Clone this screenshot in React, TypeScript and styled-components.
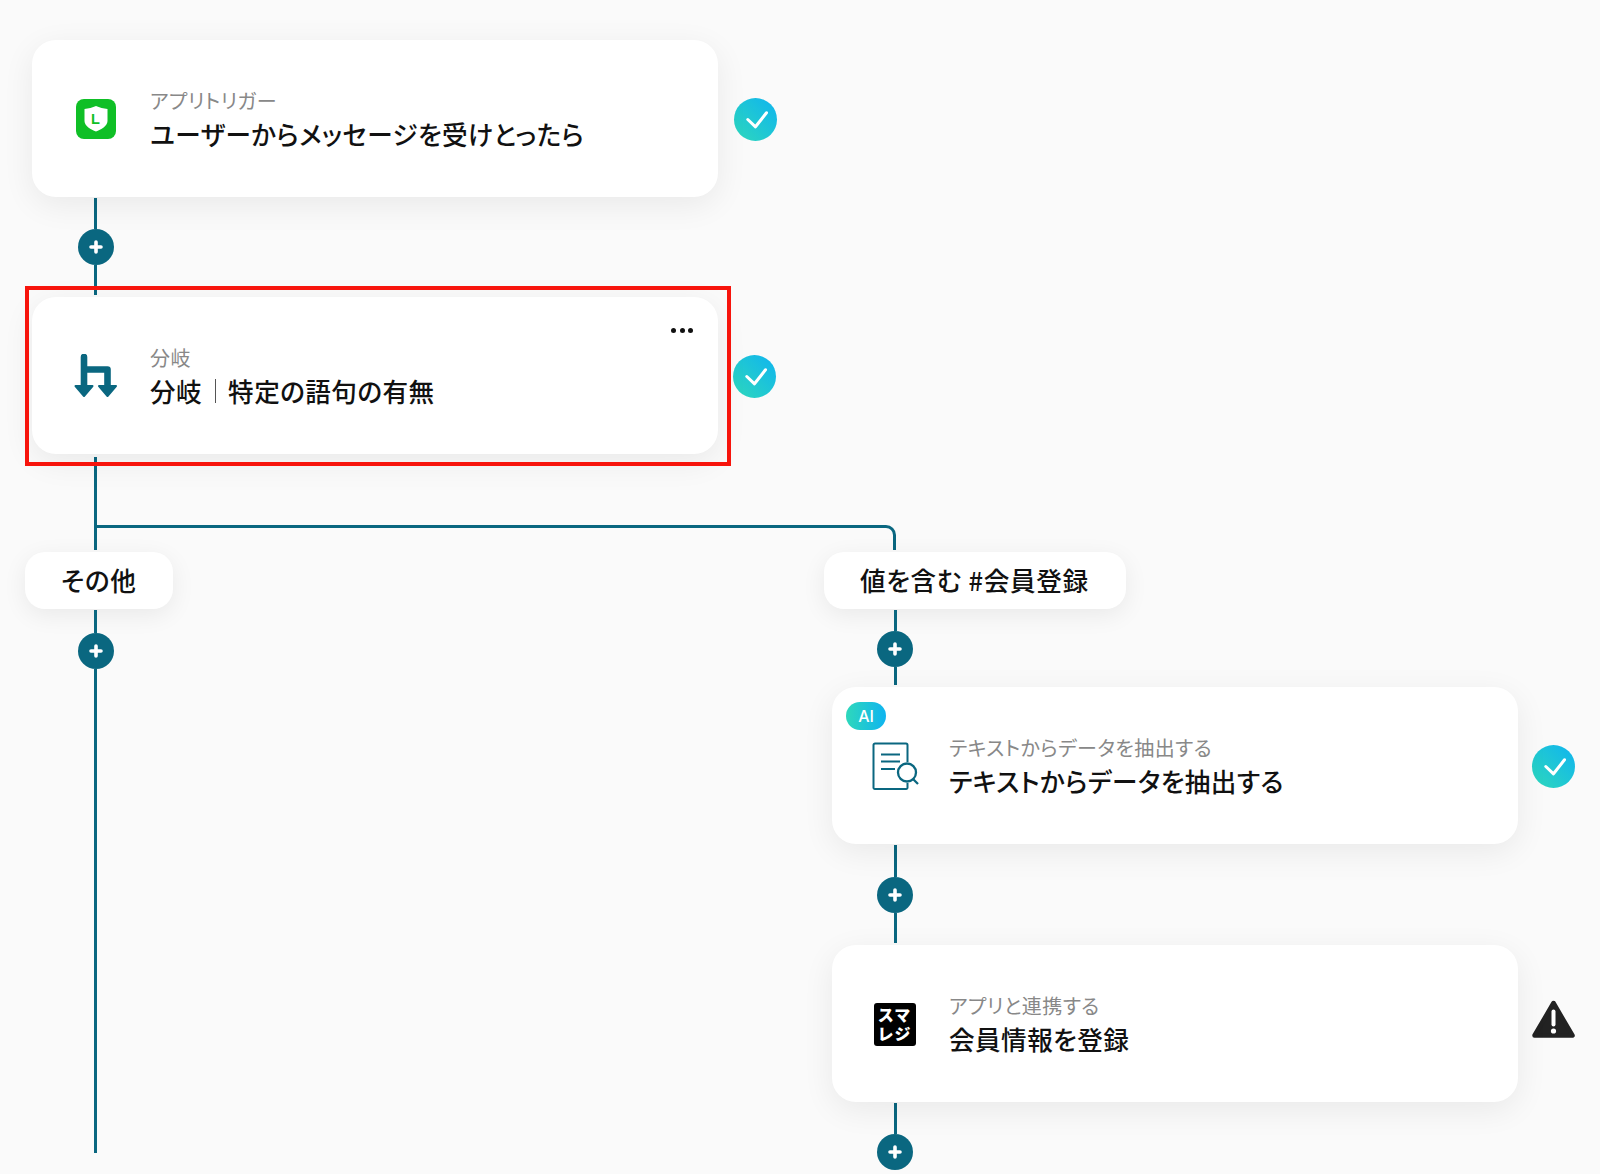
import React from 'react';
import styled, { createGlobalStyle } from 'styled-components';

const teal = '#0a6780';

const GlobalStyle = createGlobalStyle`
  html, body {
    margin: 0;
    padding: 0;
    background: #fafafa;
  }
  * {
    box-sizing: border-box;
  }
`;

const PlusIcon = () => (
  <svg width="14" height="14" viewBox="0 0 14 14">
    <path d="M7 2v10M2 7h10" stroke="#fff" strokeWidth="3.6" strokeLinecap="round" />
  </svg>
);

const Connector = ({ inset, above, below }: { inset: number; above: number; below: number }) => (
  <ConnectorBox $inset={inset}>
    <Stem $height={above} />
    <PlusButton>
      <PlusIcon />
    </PlusButton>
    <Stem $height={below} />
  </ConnectorBox>
);

const DoneBadge = ({ gap, drop }: { gap: number; drop: number }) => (
  <StatusBadge $gap={gap} $drop={drop}>
    <svg width="43" height="43" viewBox="0 0 43 43">
      <path
        d="M13.800 21.500l7.700 7.300 11-14"
        fill="none"
        stroke="#fff"
        strokeWidth="3"
        strokeLinecap="round"
        strokeLinejoin="round"
      />
    </svg>
  </StatusBadge>
);

const WarningBadge = () => (
  <WarningBox>
    <svg width="43" height="40" viewBox="0 0 43 40">
      <path
        d="M21.500 3L40.500 35.500H2.500Z"
        fill="#222"
        stroke="#222"
        strokeWidth="4.500"
        strokeLinejoin="round"
      />
      <path d="M21.500 11.500v13" stroke="#fff" strokeWidth="4" strokeLinecap="round" />
      <circle cx="21.500" cy="31" r="2.600" fill="#fff" />
    </svg>
  </WarningBox>
);

const LineIcon = () => (
  <LineLogo>
    <svg width="40" height="40" viewBox="0 0 40 40">
      <path
        d="M8.500 10C12.500 9.600 16.500 8.600 20 7c3.500 1.600 7.500 2.600 11.500 3v12c0 5-6.500 8.600-11.500 10.600C15 30.600 8.500 27 8.500 22Z"
        fill="#fff"
      />
      <text x="15" y="24.500" fontFamily="'Liberation Sans', sans-serif" fontWeight="700" fontSize="14.500" fill="#0fbf26">
        L
      </text>
    </svg>
  </LineLogo>
);

const BranchIcon = () => (
  <svg width="44" height="44" viewBox="0 0 44 44">
    <path
      d="M10 3v30M10 15.500h23.500v17"
      fill="none"
      stroke={teal}
      strokeWidth="6.600"
      strokeLinecap="round"
      strokeLinejoin="round"
    />
    <path d="M1.500 32h17L10 42Z" fill={teal} stroke={teal} strokeWidth="2" strokeLinejoin="round" />
    <path d="M25 32h17l-8.500 10Z" fill={teal} stroke={teal} strokeWidth="2" strokeLinejoin="round" />
  </svg>
);

const ExtractIcon = () => (
  <ExtractBox>
    <svg width="47" height="48" viewBox="0 0 47 48">
      <path
        d="M35 20V3a1.500 1.500 0 0 0-1.500-1.500H2.500A1.500 1.500 0 0 0 1 3v43a1.500 1.500 0 0 0 1.500 1h31a1.500 1.500 0 0 0 1.500-1v-5"
        transform="translate(0.500 0)"
        fill="none"
        stroke={teal}
        strokeWidth="2"
      />
      <path d="M9 12.500h19M9 19.500h19M9 27h14" stroke={teal} strokeWidth="2" />
      <circle cx="35" cy="30.500" r="9" fill="#fff" stroke={teal} strokeWidth="2.300" />
      <path d="M41 37l5 5" stroke={teal} strokeWidth="2.300" />
    </svg>
  </ExtractBox>
);

const App = () => (
  <>
    <GlobalStyle />
    <Canvas>
      <TopColumn>
        <StepRow>
          <Card>
            <IconSlot>
              <LineIcon />
            </IconSlot>
            <CardText>
              <CardLabel>アプリトリガー</CardLabel>
              <CardTitle>ユーザーからメッセージを受けとったら</CardTitle>
            </CardText>
          </Card>
          <DoneBadge gap={15.5} drop={1} />
        </StepRow>
        <Connector inset={45.5} above={31} below={30} />
        <StepRow>
          <Card>
            <Highlight />
            <MoreMenu>
              <Dot />
              <Dot />
              <Dot />
            </MoreMenu>
            <IconSlot>
              <BranchIcon />
            </IconSlot>
            <CardText>
              <CardLabel>分岐</CardLabel>
              <CardTitle>
                分岐<TitleDivider />特定の語句の有無
              </CardTitle>
            </CardText>
          </Card>
          <DoneBadge gap={14.5} drop={2} />
        </StepRow>
        <BranchStem />
        <BranchRail />
      </TopColumn>
      <BranchRow>
        <LeftBranch>
          <BranchPill>その他</BranchPill>
          <Connector inset={52.5} above={23} below={484} />
        </LeftBranch>
        <RightBranch>
          <BranchPill>値を含む #会員登録</BranchPill>
          <Connector inset={53} above={21} below={18} />
          <IndentedSteps>
            <StepRow>
              <Card $gap={31}>
                <AiTag>AI</AiTag>
                <IconSlot>
                  <ExtractIcon />
                </IconSlot>
                <CardText>
                  <CardLabel>テキストからデータを抽出する</CardLabel>
                  <CardTitle>テキストからデータを抽出する</CardTitle>
                </CardText>
              </Card>
              <DoneBadge gap={14} drop={1} />
            </StepRow>
          </IndentedSteps>
          <Connector inset={53} above={32} below={30} />
          <IndentedSteps>
            <StepRow>
              <Card $gap={31}>
                <IconSlot>
                  <SmaregiLogo>
                    <SmaregiLine>スマ</SmaregiLine>
                    <SmaregiLine>レジ</SmaregiLine>
                  </SmaregiLogo>
                </IconSlot>
                <CardText>
                  <CardLabel>アプリと連携する</CardLabel>
                  <CardTitle>会員情報を登録</CardTitle>
                </CardText>
              </Card>
              <WarningBadge />
            </StepRow>
          </IndentedSteps>
          <Connector inset={53} above={31} below={0} />
        </RightBranch>
      </BranchRow>
    </Canvas>
  </>
);

const Canvas = styled.div`
  width: 1600px;
  height: 1174px;
  overflow: hidden;
  padding-top: 40px;
  background: #fafafa;
  font-family: 'Noto Sans CJK JP', 'Noto Sans', sans-serif;
  color: #111;
`;

const TopColumn = styled.div`
  display: flex;
  flex-direction: column;
  padding-left: 32px;
`;

const StepRow = styled.div`
  display: flex;
  align-items: center;
`;

const Card = styled.div<{ $gap?: number }>`
  position: relative;
  display: flex;
  align-items: center;
  flex: none;
  width: 686px;
  height: 157px;
  padding-left: 42px;
  gap: ${({ $gap }) => $gap ?? 32}px;
  background: #fff;
  border-radius: 24px;
  box-shadow: 0 8px 32px rgba(0, 0, 0, 0.07);
`;

const IconSlot = styled.div`
  display: flex;
  align-items: center;
  justify-content: center;
  flex: none;
  width: 44px;
  height: 48px;
`;

const CardText = styled.div`
  display: flex;
  flex-direction: column;
`;

const CardLabel = styled.div`
  font-size: 20px;
  line-height: 30px;
  letter-spacing: 0.45px;
  color: #888;
  font-feature-settings: 'palt';
`;

const CardTitle = styled.div`
  display: flex;
  align-items: center;
  font-size: 25.6px;
  line-height: 36px;
  letter-spacing: 0.45px;
  font-weight: 500;
  color: #111;
  font-feature-settings: 'palt';
`;

const TitleDivider = styled.span`
  display: block;
  width: 1px;
  height: 24px;
  margin: 0 12.5px;
  background: #555;
`;

const Highlight = styled.div`
  position: absolute;
  top: -11px;
  left: -7px;
  right: -13px;
  bottom: -12px;
  border: 4px solid #f7140c;
  pointer-events: none;
`;

const MoreMenu = styled.div`
  position: absolute;
  top: 31px;
  right: 25px;
  display: flex;
  gap: 3.5px;
`;

const Dot = styled.span`
  width: 5px;
  height: 5px;
  border-radius: 50%;
  background: #111;
`;

const StatusBadge = styled.div<{ $gap: number; $drop: number }>`
  flex: none;
  width: 43px;
  height: 43px;
  margin-left: ${({ $gap }) => $gap}px;
  margin-top: ${({ $drop }) => $drop}px;
  border-radius: 50%;
  background: linear-gradient(45deg, #2ed8bb, #0fb4f0);
`;

const WarningBox = styled.div`
  flex: none;
  width: 43px;
  height: 40px;
  margin: -7px 0 0 14px;
`;

const LineLogo = styled.div`
  width: 40px;
  height: 40px;
  margin-left: -1px;
  border-radius: 8px;
  background: #0fbf26;
`;

const ExtractBox = styled.div`
  flex: none;
  width: 47px;
  height: 48px;
  margin-left: -2px;
`;

const SmaregiLogo = styled.div`
  flex: none;
  width: 42px;
  height: 43px;
  margin: 2px 0 0 -3px;
  padding-top: 2px;
  border-radius: 3px;
  background: #000;
  color: #fff;
  text-align: center;
`;

const SmaregiLine = styled.div`
  font-size: 16px;
  line-height: 19px;
  letter-spacing: 1px;
  font-weight: 900;
`;

const AiTag = styled.div`
  position: absolute;
  top: 15px;
  left: 14px;
  width: 40px;
  height: 28px;
  border-radius: 14px;
  background: linear-gradient(90deg, #2ed8bb, #0fb4f0);
  color: #fff;
  font-family: Inter, 'Noto Sans', sans-serif;
  font-size: 16px;
  font-weight: 500;
  line-height: 28px;
  text-align: center;
`;

const ConnectorBox = styled.div<{ $inset: number }>`
  display: flex;
  flex-direction: column;
  align-items: center;
  width: 36px;
  margin-left: ${({ $inset }) => $inset}px;
  padding: 1px 0 2px;
`;

const Stem = styled.div<{ $height: number }>`
  width: 3px;
  height: ${({ $height }) => $height}px;
  background: ${teal};
`;

const PlusButton = styled.div`
  display: flex;
  align-items: center;
  justify-content: center;
  flex: none;
  width: 36px;
  height: 36px;
  border-radius: 50%;
  background: ${teal};
`;

const BranchStem = styled.div`
  width: 3px;
  height: 68px;
  margin: 3px 0 0 62px;
  background: ${teal};
`;

const BranchRail = styled.div`
  width: 802px;
  height: 25px;
  margin-left: 62px;
  border: 3px solid ${teal};
  border-bottom: 0;
  border-top-right-radius: 10px;
`;

const BranchRow = styled.div`
  display: flex;
  padding: 2px 0 0 25px;
`;

const LeftBranch = styled.div`
  flex: none;
  width: 799px;
`;

const RightBranch = styled.div`
  flex: none;
  width: 760px;
`;

const IndentedSteps = styled.div`
  margin-left: 8px;
`;

const BranchPill = styled.div`
  display: inline-flex;
  align-items: center;
  height: 57px;
  padding: 0 37px 2px 36px;
  border-radius: 20px;
  background: #fff;
  box-shadow: 0 6px 24px rgba(0, 0, 0, 0.07);
  font-size: 25.6px;
  font-weight: 500;
  letter-spacing: 0.7px;
  color: #111;
  font-feature-settings: 'palt';
  vertical-align: top;
`;

export default App;
